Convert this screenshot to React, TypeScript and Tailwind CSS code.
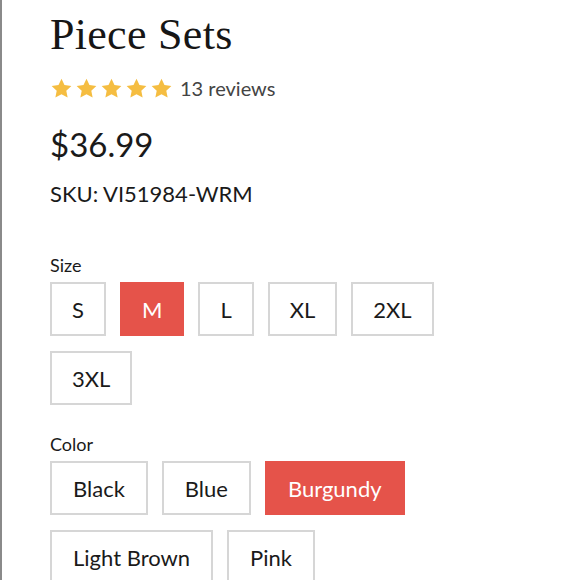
const sizes = ['S', 'M', 'L', 'XL', '2XL', '3XL'];
const colors = ['Black', 'Blue', 'Burgundy', 'Light Brown', 'Pink'];

function Star() {
  return (
    <svg viewBox="0 0 24 24" className="w-[23px] h-[23px]">
      <path
        fill="#f5bd41"
        d="M12 1.8l3.1 6.6 7.2.9-5.3 5 1.4 7.1L12 17.9l-6.4 3.5 1.4-7.1-5.3-5 7.2-.9z"
      />
    </svg>
  );
}

function Option({ label, active, tight }: { label: string; active: boolean; tight?: boolean }) {
  return (
    <div
      className={`h-[54px] flex items-center justify-center text-[22px] border-2 ${tight ? 'px-[20px]' : 'px-[21px]'} ${
        active ? 'bg-[#e5534a] border-[#e5534a] text-white' : 'bg-white border-[#d6d6d6] text-[#1a1a1a]'
      }`}
    >
      {label}
    </div>
  );
}

export default function App() {
  return (
    <div className="w-[580px] h-[580px] overflow-hidden bg-white border-l-2 border-[#8a8a8a] pl-[48px] font-['Lato','Liberation_Sans',sans-serif] text-[#1a1a1a]">
      <h1 className="font-['Liberation_Serif',serif] text-[44px] leading-none pt-[13px] tracking-[0.3px] text-[#161616]">
        Piece Sets
      </h1>
      <div className="flex items-center mt-[16px]">
        <div className="flex gap-[2px]">
          {[0, 1, 2, 3, 4].map((i) => (
            <Star key={i} />
          ))}
        </div>
        <span className="ml-[7px] text-[20px] text-[#444]">13 reviews</span>
      </div>
      <div className="text-[33px] leading-none mt-[25px]">$36.99</div>
      <div className="text-[22px] leading-none mt-[22px]">SKU: VI51984-WRM</div>

      <div className="text-[18px] leading-none mt-[51px]">Size</div>
      <div className="flex flex-wrap gap-x-[14px] gap-y-[15px] mt-[8px] w-[420px]">
        {sizes.map((s) => (
          <Option key={s} label={s} active={s === 'M'} tight />
        ))}
      </div>

      <div className="text-[18px] leading-none mt-[30px]">Color</div>
      <div className="flex flex-wrap gap-x-[14px] gap-y-[15px] mt-[8px] w-[420px]">
        {colors.map((c) => (
          <Option key={c} label={c} active={c === 'Burgundy'} />
        ))}
      </div>
    </div>
  );
}
